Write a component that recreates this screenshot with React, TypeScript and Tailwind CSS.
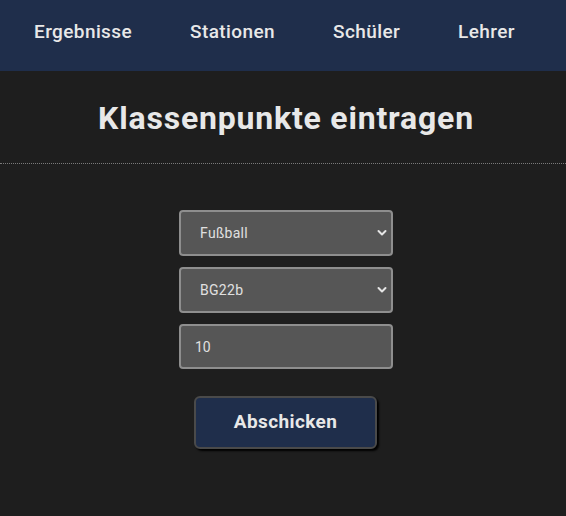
function Chevron() {
    return (
        <svg className="pointer-events-none absolute right-[4px] top-1/2 -translate-y-1/2" width="10" height="7" viewBox="0 0 10 7" fill="none">
            <path d="M1.5 1.5 L5 5 L8.5 1.5" stroke="#e5e5e5" strokeWidth="2" strokeLinecap="round" strokeLinejoin="round" />
        </svg>
    )
}

function FakeSelect({ value }: { value: string }) {
    return (
        <div className="relative flex h-[46px] w-full items-center rounded-[4px] border-2 border-[#8e8e8e] bg-[#565656] pl-[19px] pt-[1px] text-[14px] tracking-[0.3px] text-[#e0e0e0]">
            {value}
            <Chevron />
        </div>
    )
}

export default function App() {
    const navItems = ["Ergebnisse", "Stationen", "Schüler", "Lehrer"]

    return (
        <div className="min-h-[516px] bg-[#1e1e1e] font-['Roboto',sans-serif] text-[#e6e6e6]">
            <nav className="flex h-[71px] items-center gap-[58px] bg-[#1f2e4b] pl-[34px] pb-[6px]">
                {navItems.map((item) => (
                    <a key={item} href="#" className="text-[19px] font-medium tracking-[0.4px] text-[#e8e8e8]">
                        {item}
                    </a>
                ))}
            </nav>

            <div className="flex h-[93px] items-center justify-center border-b border-dotted border-[#7a7a7a]">
                <h1 className="text-[32px] font-bold tracking-[0.8px] text-[#e8e8e8] pl-[6px] pt-[2px]">Klassenpunkte eintragen</h1>
            </div>

            <form className="flex flex-col items-center pt-[46px]" onSubmit={(e) => e.preventDefault()}>
                <div className="flex w-[214px] flex-col gap-[11px] ml-[6px]">
                    <FakeSelect value="Fußball" />
                    <FakeSelect value="BG22b" />
                    <input defaultValue="10" className="h-[45px] w-full rounded-[4px] border-2 border-[#8e8e8e] bg-[#565656] pl-[14px] text-[14px] text-[#e0e0e0] outline-none" />
                </div>

                <button type="submit" className="mt-[27px] h-[53px] w-[183px] rounded-[6px] border-2 border-[#4a4a4a] bg-[#1f2e4b] text-[19px] font-bold tracking-[0.4px] text-[#e8e8e8] shadow-[2px_2px_2px_#000] ml-[5px]">
                    Abschicken
                </button>
            </form>
        </div>
    )
}
